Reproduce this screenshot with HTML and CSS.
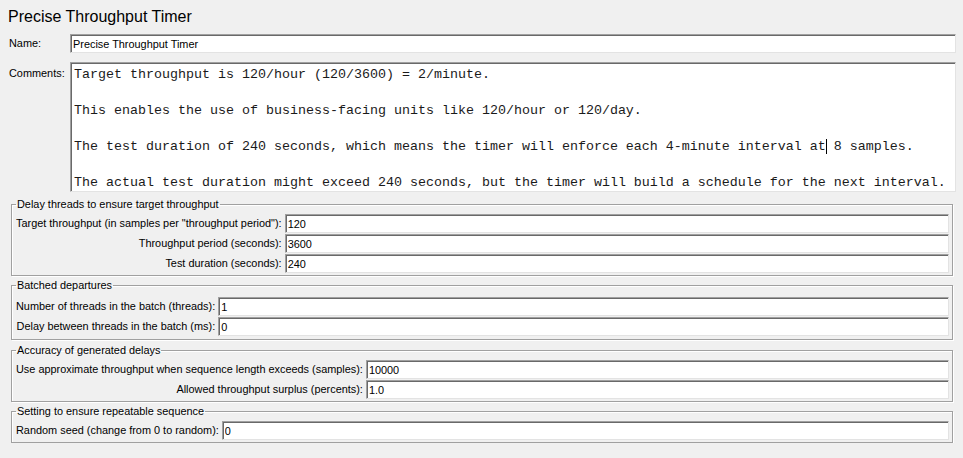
FILE: index.html
```html
<!DOCTYPE html>
<html>
<head>
<meta charset="utf-8">
<title>Precise Throughput Timer</title>
<link rel="stylesheet" href="styles.css">
</head>
<body>
<div class="panel">
  <div class="title">Precise Throughput Timer</div>
  <div class="row name-row">
    <label class="side-label">Name:</label>
    <input class="field" type="text" value="Precise Throughput Timer">
  </div>
  <div class="row comments-row">
    <label class="side-label comments-label">Comments:</label>
    <div class="textarea">Target throughput is 120/hour (120/3600) = 2/minute.

This enables the use of business-facing units like 120/hour or 120/day.

The test duration of 240 seconds, which means the timer will enforce each 4-minute interval <span class="caret-after">at</span> 8 samples.

The actual test duration might exceed 240 seconds, but the timer will build a schedule for the next interval.</div>
  </div>

  <fieldset class="group group-delay">
    <legend>Delay threads to ensure target throughput</legend>
    <div class="grid">
      <label>Target throughput (in samples per "throughput period"):</label>
      <input class="field" type="text" value="120">
      <label>Throughput period (seconds):</label>
      <input class="field" type="text" value="3600">
      <label>Test duration (seconds):</label>
      <input class="field" type="text" value="240">
    </div>
  </fieldset>

  <fieldset class="group group-batch">
    <legend>Batched departures</legend>
    <div class="grid">
      <label>Number of threads in the batch (threads):</label>
      <input class="field" type="text" value="1">
      <label>Delay between threads in the batch (ms):</label>
      <input class="field" type="text" value="0">
    </div>
  </fieldset>

  <fieldset class="group group-accuracy">
    <legend>Accuracy of generated delays</legend>
    <div class="grid">
      <label>Use approximate throughput when sequence length exceeds (samples):</label>
      <input class="field" type="text" value="10000">
      <label>Allowed throughput surplus (percents):</label>
      <input class="field" type="text" value="1.0">
    </div>
  </fieldset>

  <fieldset class="group group-seed">
    <legend>Setting to ensure repeatable sequence</legend>
    <div class="grid">
      <label>Random seed (change from 0 to random):</label>
      <input class="field" type="text" value="0">
    </div>
  </fieldset>
</div>
</body>
</html>
```
FILE: styles.css
```css
html, body {
  margin: 0;
  padding: 0;
  background: #f0f0f0;
}
body {
  font-family: "Liberation Sans", Arial, sans-serif;
  font-size: 10.9px;
  color: #000;
}
.panel {
  display: flex;
  flex-direction: column;
}
.title {
  font-size: 16px;
  line-height: 20px;
  padding: 7px 0 0 8px;
  margin-bottom: 7px;
}
.row {
  display: flex;
  align-items: flex-start;
  padding: 0 7px 0 9px;
}
.side-label {
  width: 61px;
  flex: none;
  line-height: 19px;
}
.comments-row {
  margin-top: 9px;
}
.comments-label {
  padding-top: 2px;
}
.field {
  box-sizing: border-box;
  height: 19px;
  margin: 0;
  padding: 0 2px;
  font-family: "Liberation Sans", Arial, sans-serif;
  font-size: 10.9px;
  color: #000;
  background: #fff;
  border: 1px solid;
  border-color: #a0a0a0 #e3e3e3 #e3e3e3 #a0a0a0;
  box-shadow: inset 1px 1px 0 #696969;
  outline: none;
  min-width: 0;
}
.row .field {
  flex: 1;
}
.textarea {
  flex: 1;
  box-sizing: border-box;
  height: 130px;
  background: #fff;
  border: 1px solid;
  border-color: #a0a0a0 #e3e3e3 #e3e3e3 #a0a0a0;
  box-shadow: inset 1px 1px 0 #696969;
  padding: 3px 0 0 3px;
  font-family: "Liberation Mono", "Courier New", monospace;
  font-size: 13.33px;
  line-height: 18px;
  color: #1a1a1a;
  white-space: pre;
  overflow: hidden;
}
.caret-after {
  box-shadow: 1px 0 0 #000;
}
.group {
  margin: 3px 10px 0 11px;
  padding: 3px 3px 2px 4px;
  border: 1px solid #a0a0a0;
  box-shadow: inset 1px 1px 0 #fff, 1px 1px 0 #fff;
  min-width: 0;
}
.group-delay {
  margin-top: 6px;
}
.group-batch {
  padding-top: 5px;
  padding-bottom: 3px;
}
.group-accuracy {
  margin-top: 4px;
}
.group legend {
  padding: 0 1px;
  line-height: 13px;
}
.grid {
  display: grid;
  grid-template-columns: max-content 1fr;
  column-gap: 3px;
  row-gap: 1px;
}
.grid label {
  justify-self: end;
  line-height: 19px;
  white-space: nowrap;
}
```
